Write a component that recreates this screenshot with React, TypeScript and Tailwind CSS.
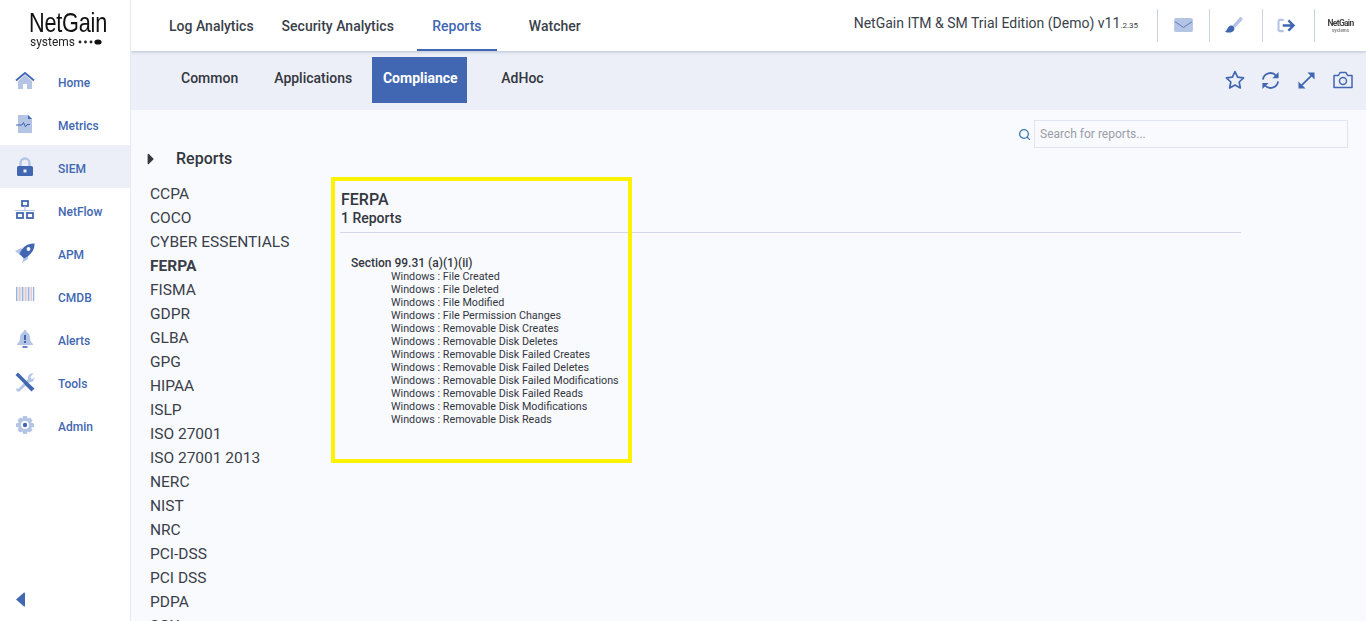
import type { ReactNode } from 'react';
import { FaCaretRight } from 'react-icons/fa';
import { FiSearch } from 'react-icons/fi';

const LIGHT = '#b4c4e4';
const BLUE = '#4267b2';

function Icon({ children }: { children: ReactNode }) {
  return (
    <svg viewBox="0 0 20 20" className="h-5 w-5">
      {children}
    </svg>
  );
}

const HomeIcon = (
  <Icon>
    <path d="M3 10 L10 4 L17 10 V18 H12 V13 H8 V18 H3 Z" fill={LIGHT} />
    <path d="M1 9.5 L10 2 L19 9.5" fill="none" stroke={BLUE} strokeWidth="1.8" />
  </Icon>
);
const MetricsIcon = (
  <Icon>
    <path d="M3 1 H13 L17 5 V19 H3 Z" fill={LIGHT} />
    <path d="M13 1 L17 5 H13 Z" fill={BLUE} />
    <path d="M1 11 H7 L8.5 8.5 L10.5 13 L12 10.5 H15" fill="none" stroke={BLUE} strokeWidth="1" />
  </Icon>
);
const LockIcon = (
  <Icon>
    <path d="M5.5 9 V6 a4.5 4.5 0 0 1 9 0 V9" fill="none" stroke={LIGHT} strokeWidth="2.4" />
    <rect x="2" y="9" width="16" height="10" rx="1.5" fill={BLUE} />
    <rect x="8.5" y="12.5" width="3" height="3" fill="#eef1f8" />
  </Icon>
);
const NetflowIcon = (
  <Icon>
    <rect x="7" y="1" width="6" height="5" fill="none" stroke={BLUE} strokeWidth="1.8" />
    <path d="M10 6 V10 M0 10.5 H20" stroke={LIGHT} strokeWidth="1.2" />
    <rect x="2" y="13" width="6" height="5" fill="none" stroke={BLUE} strokeWidth="1.8" />
    <rect x="12" y="13" width="6" height="5" fill="none" stroke={BLUE} strokeWidth="1.8" />
  </Icon>
);
const RocketIcon = (
  <Icon>
    <path d="M0 8 L6 5 L8 8 L5 12 Z M9 14 L13 11 L13 16 L7 20 Z" fill={LIGHT} />
    <path d="M19.5 0.5 C13 0 7 4 4.5 11 L9 15.5 C16 12 20 7 19.5 0.5 Z" fill={BLUE} />
    <circle cx="13.5" cy="6" r="1.9" fill="#fff" />
  </Icon>
);
const BarcodeIcon = (
  <Icon>
    {[1, 4, 7, 10, 13, 16, 18].map((x, i) => (
      <rect key={x} x={x} y="1" width="1.3" height="14" fill={i % 2 ? '#f0c4b8' : '#93b4e6'} />
    ))}
    {[2.5, 5.5, 8.5, 11.5, 14.5].map((x) => (
      <rect key={x} x={x} y="1" width="1" height="14" fill="#c3cde4" />
    ))}
  </Icon>
);
const BellIcon = (
  <Icon>
    <path d="M10 1 a1.5 1.5 0 0 1 1.5 2 C14 4 15 6 15 9 C15 12 16.5 13.5 18 15 V16 H2 V15 C3.5 13.5 5 12 5 9 C5 6 6 4 8.5 3 A1.5 1.5 0 0 1 10 1 Z" fill={LIGHT} />
    <rect x="9" y="6" width="2" height="5" fill={BLUE} />
    <rect x="9" y="12" width="2" height="2" fill={BLUE} />
    <path d="M7.5 18 H12.5" stroke={BLUE} strokeWidth="1.6" />
  </Icon>
);
const ToolsIcon = (
  <Icon>
    <path d="M3 17 L13 7 A4.5 4.5 0 0 1 18.5 1.5 L15.5 4.5 L16 6.5 L18 7 L19.5 5 A5 5 0 0 1 14 10.5 L5 19 A2 2 0 0 1 2 16 Z" fill={LIGHT} />
    <path d="M0.5 3 L3 0.5 L11 8.5 L14 11.5 L19.5 16.5 L16.5 19.5 L11 14 L8.5 11 Z" fill={BLUE} />
  </Icon>
);
const GearIcon = (
  <Icon>
    <path d="M8 1 H12 L12.5 3.5 L15 2.5 L17.5 5.5 L16 7.5 L19 8.5 V12 L16 12.5 L17.5 15 L15 17.5 L12.5 16.5 L12 19 H8 L7.5 16.5 L5 17.5 L2.5 15 L4 12.5 L1 12 V8.5 L4 7.5 L2.5 5.5 L5 2.5 L7.5 3.5 Z" fill={LIGHT} />
    <circle cx="10" cy="10" r="4" fill="#fff" />
    <circle cx="10" cy="10" r="2.2" fill={BLUE} />
  </Icon>
);

const navItems = [
  { label: 'Home', icon: HomeIcon },
  { label: 'Metrics', icon: MetricsIcon },
  { label: 'SIEM', icon: LockIcon, active: true },
  { label: 'NetFlow', icon: NetflowIcon },
  { label: 'APM', icon: RocketIcon },
  { label: 'CMDB', icon: BarcodeIcon },
  { label: 'Alerts', icon: BellIcon },
  { label: 'Tools', icon: ToolsIcon },
  { label: 'Admin', icon: GearIcon },
];

const standards = [
  'CCPA', 'COCO', 'CYBER ESSENTIALS', 'FERPA', 'FISMA', 'GDPR', 'GLBA', 'GPG', 'HIPAA', 'ISLP',
  'ISO 27001', 'ISO 27001 2013', 'NERC', 'NIST', 'NRC', 'PCI-DSS', 'PCI DSS', 'PDPA', 'SOX',
];

const reports = [
  'File Created',
  'File Deleted',
  'File Modified',
  'File Permission Changes',
  'Removable Disk Creates',
  'Removable Disk Deletes',
  'Removable Disk Failed Creates',
  'Removable Disk Failed Deletes',
  'Removable Disk Failed Modifications',
  'Removable Disk Failed Reads',
  'Removable Disk Modifications',
  'Removable Disk Reads',
];

function Sidebar() {
  return (
    <aside className="z-20 flex h-[621px] w-[131px] shrink-0 flex-col border-r border-[#e6e9f3] bg-white">
      <div className="h-[59px] pl-[29px] pt-[10px] text-[#111]">
        <div className="h-[25px] origin-left scale-x-[0.775] whitespace-nowrap font-['Liberation_Sans',sans-serif] text-[28px] leading-[25px] tracking-[-0.3px]">NetGain</div>
        <div className="flex items-center pl-[1px] text-[#222]">
          <span className="w-[48px] origin-left scale-x-[0.92] text-[13px] leading-[13px]">systems</span>
          <svg viewBox="0 0 26 6" className="h-[6px] w-[26px]">
            <circle cx="2" cy="3" r="1.4" fill="#222" />
            <circle cx="7.5" cy="3" r="1.4" fill="#222" />
            <circle cx="13" cy="3" r="1.4" fill="#222" />
            <ellipse cx="20" cy="3" rx="3.6" ry="2.6" fill="#111" />
          </svg>
        </div>
      </div>
      <nav>
        {navItems.map((item) => (
          <div
            key={item.label}
            className={`flex h-[43px] items-center pl-[15px] ${item.active ? 'bg-[#eceff7]' : ''}`}
          >
            <span className="w-[43px]">{item.icon}</span>
            <span className="mt-[4px] text-xs font-medium text-[#4267b2]">{item.label}</span>
          </div>
        ))}
      </nav>
      <div className="mt-auto pb-[14px] pl-[16px]">
        <svg viewBox="0 0 9 15" className="h-[15px] w-[9px]">
          <path d="M8 0.5 Q9 0 9 1.5 V13.5 Q9 15 8 14.5 L0 7.5 Z" fill={BLUE} />
        </svg>
      </div>
    </aside>
  );
}

function TopBar() {
  return (
    <header className="z-10 flex h-[51px] shrink-0 items-center bg-white pl-[38px] shadow-[0_1px_3px_rgba(120,135,170,0.45)]">
      <div className="flex h-full text-sm font-medium text-[#3a3f4a]">
        <span className="flex items-center">Log Analytics</span>
        <span className="ml-[28px] flex items-center">Security Analytics</span>
        <span className="ml-[23px] flex w-[80px] items-center justify-center border-y-2 border-t-transparent border-b-[#4267b2] text-[#4267b2]">Reports</span>
        <span className="ml-[32px] flex items-center">Watcher</span>
      </div>
      <div className="ml-auto flex h-full items-center">
        <span className="mb-[5px] text-sm text-[#3a3f4a]">
          NetGain ITM &amp; SM Trial Edition (Demo) v11<span className="text-[8px]">.2.35</span>
        </span>
        <div className="ml-[19px] flex h-[33px] w-[52px] items-center justify-center border-l border-[#c9d3e6]">
          <svg viewBox="0 0 20 16" className="h-[15px] w-[19px]">
            <rect width="20" height="15" rx="2" fill={LIGHT} />
            <path d="M1 4 L10 10 L19 4" fill="none" stroke={BLUE} strokeWidth="0.8" />
          </svg>
        </div>
        <div className="flex h-[33px] w-[53px] items-center justify-center border-l border-[#c9d3e6] pr-[6px]">
          <svg viewBox="0 0 20 20" className="h-[19px] w-[19px]">
            <path d="M9 10 L16 2 A1.8 1.8 0 0 1 19 4.5 L12 12 Z" fill={LIGHT} />
            <path d="M7 10 C10 10 12 12 10.5 15 C9 18 4 18 1 16.5 C3.5 15.5 3.5 11 7 10 Z" fill={BLUE} />
          </svg>
        </div>
        <div className="flex h-[33px] w-[52px] items-center justify-center border-l border-[#c9d3e6] pr-[4px]">
          <svg viewBox="0 0 20 16" className="h-[15px] w-[19px]">
            <path d="M7 2 H3 A1.5 1.5 0 0 0 1.5 3.5 V12.5 A1.5 1.5 0 0 0 3 14 H7" fill="none" stroke={LIGHT} strokeWidth="2.2" />
            <path d="M6 8 H17 M12 2.5 L17.5 8 L12 13.5" fill="none" stroke={BLUE} strokeWidth="2.6" />
          </svg>
        </div>
        <div className="flex h-[33px] w-[52px] flex-col items-center justify-center border-l border-[#c9d3e6] text-[#444]">
          <span className="text-[8.5px] font-bold leading-[10px] tracking-[-0.7px] blur-[0.6px]">NetGain</span>
          <span className="text-[4.5px] font-bold leading-[6px] text-[#888] blur-[0.6px]">systems</span>
        </div>
      </div>
    </header>
  );
}

function SubBar() {
  return (
    <div className="flex h-[59px] shrink-0 items-start bg-[#eceff7] pl-[50px] pr-[4px] pt-[6px] text-sm font-medium text-[#33373f]">
      <span className="flex h-[46px] items-center pb-[4px]">Common</span>
      <span className="ml-[36px] flex h-[46px] items-center pb-[4px]">Applications</span>
      <span className="ml-[20px] flex h-[46px] w-[95px] items-center justify-center bg-[#4267b2] pb-[4px] pl-[1px] font-bold text-white">Compliance</span>
      <span className="ml-[34px] flex h-[46px] items-center pb-[4px]">AdHoc</span>
      <div className="ml-auto flex h-[46px] items-center text-[#4267b2]">
        <span className="flex w-[36px] justify-center pl-[1px]">
          <svg viewBox="0 0 20 20" className="h-[20px] w-[20px]" fill="none" stroke="currentColor" strokeWidth="1.7" strokeLinejoin="round">
            <path d="M10 1.6 L12.6 7.1 L18.6 7.9 L14.2 12 L15.3 18 L10 15.1 L4.7 18 L5.8 12 L1.4 7.9 L7.4 7.1 Z" />
          </svg>
        </span>
        <span className="flex w-[36px] justify-center">
          <svg viewBox="0 0 20 20" className="h-[19px] w-[19px]" fill="none" stroke="currentColor" strokeWidth="1.9">
            <path d="M2 9 A8 8 0 0 1 16 5" />
            <path d="M18 11 A8 8 0 0 1 4 15" />
            <path d="M18.5 1 V7.5 H12 Z M1.5 19 V12.5 H8 Z" fill="currentColor" stroke="none" />
          </svg>
        </span>
        <span className="flex w-[36px] justify-center">
          <svg viewBox="0 0 18 18" className="h-[17px] w-[17px]" fill="none" stroke="currentColor" strokeWidth="1.9">
            <path d="M4 14 L14 4" />
            <path d="M10 0.5 H17.5 V8 Z M0.5 10 V17.5 H8 Z" fill="currentColor" stroke="none" />
          </svg>
        </span>
        <span className="flex w-[38px] justify-center">
          <svg viewBox="0 0 20 18" className="h-[18px] w-[20px]" fill="none" stroke="currentColor" strokeWidth="1.5">
            <path d="M1 4.5 H5.5 L7 1.5 H13 L14.5 4.5 H19 V16.5 H1 Z" strokeLinejoin="round" />
            <circle cx="10" cy="10" r="3.5" />
          </svg>
        </span>
      </div>
    </div>
  );
}

function ReportList() {
  return (
    <div className="w-[190px] shrink-0 pl-[16px]">
      <div className="flex h-[22px] items-center text-[#33373f]">
        <FaCaretRight size={18} className="-ml-[5px]" />
        <span className="ml-[16px] text-base font-medium">Reports</span>
      </div>
      <ul className="mt-[12px] pl-[3px] text-[15.5px] text-[#3a3f4a]">
        {standards.map((name) => (
          <li key={name} className={`h-[24px] whitespace-nowrap leading-[24px] ${name === 'FERPA' ? 'font-bold' : ''}`}>
            {name}
          </li>
        ))}
      </ul>
    </div>
  );
}

function ReportDetail() {
  return (
    <section className="ml-[19px] w-[901px] shrink-0 pt-[42px] text-[#33373f]">
      <div className="border-b border-[#d3d8e8] pb-[5px] pl-[1px]">
        <h2 className="text-base font-medium leading-[19px]">FERPA</h2>
        <p className="text-sm font-medium leading-[18px]">1 Reports</p>
      </div>
      <div className="pl-[11px] pt-[24px]">
        <p className="text-xs font-medium leading-[13px]">Section 99.31 (a)(1)(ii)</p>
        <ul className="pl-[40px] text-[10.75px] leading-[13px]">
          {reports.map((name) => (
            <li key={name} className="whitespace-nowrap">Windows : {name}</li>
          ))}
        </ul>
      </div>
    </section>
  );
}

export default function App() {
  return (
    <div className="relative flex h-[621px] w-[1366px] overflow-hidden bg-[#f9fafd] font-['Roboto',sans-serif]">
      <Sidebar />
      <main className="flex min-w-0 flex-1 flex-col">
        <TopBar />
        <SubBar />
        <div className="flex h-[38px] shrink-0 items-end justify-end pr-[18px]">
          <div className="flex h-[28px] items-center">
            <FiSearch size={13} strokeWidth={2.4} className="mr-[3px] text-[#3b79b5]" />
            <input
              placeholder="Search for reports..."
              className="h-[28px] w-[314px] border border-[#e0e4f0] bg-[#f9fafd] px-[5px] text-xs placeholder:text-[#9a9ea8]"
            />
          </div>
        </div>
        <div className="flex min-h-0 flex-1">
          <ReportList />
          <ReportDetail />
        </div>
      </main>
      {/* yellow annotation drawn over the page */}
      <div className="pointer-events-none absolute left-[331px] top-[177px] h-[286px] w-[301px] border-4 border-[#fff200]" />
    </div>
  );
}
